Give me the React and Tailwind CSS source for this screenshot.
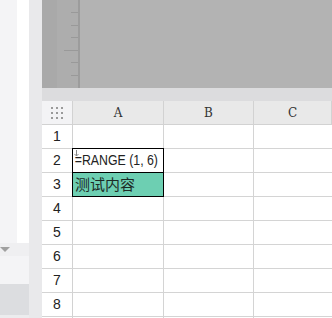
import React from "react";

const rows = [1, 2, 3, 4, 5, 6, 7, 8, null];

function Ruler() {
  const ticks = [12, 25, 37, 62, 75];
  return (
    <div className="relative w-[38px] h-full flex">
      <div className="w-[15px] h-full bg-[#a9a9a9]" />
      <div className="flex-1 h-full bg-[#adadad] border-r-2 border-[#9c9c9c] relative">
        {ticks.map((t) => (
          <div key={t} className="absolute right-0 h-px w-[7px] bg-[#999]" style={{ top: t }} />
        ))}
        <div className="absolute right-0 h-px w-[14px] bg-[#999]" style={{ top: 50 }} />
      </div>
    </div>
  );
}

export default function App() {
  const sans = { fontFamily: '"Liberation Sans", Arial, sans-serif' };
  return (
    <div className="w-[332px] h-[318px] flex overflow-hidden bg-white" style={sans}>
      {/* left panel */}
      <div className="w-[29px] h-full flex flex-col shrink-0">
        <div className="h-[243px] shrink-0 flex">
          <div className="w-[17px] bg-[#f4f4f6]" />
          <div className="flex-1 bg-white" />
        </div>
        <div className="h-[13px] shrink-0 bg-[#efeff1] flex items-center">
          <svg width="10" height="6" viewBox="0 0 10 6">
            <polygon points="0,0 10,0 5,5" fill="#a0a0a0" />
          </svg>
        </div>
        <div className="h-[28px] shrink-0 bg-[#f4f4f6]" />
        <div className="h-[31px] shrink-0 bg-[#dcdde0]" />
        <div className="flex-1 bg-[#ececee]" />
      </div>
      <div className="w-[13px] h-full shrink-0 bg-[#e9e9eb]" />
      {/* main */}
      <div className="flex-1 h-full flex flex-col overflow-hidden">
        <div className="h-[88px] shrink-0 bg-[#b3b3b3] flex">
          <Ruler />
        </div>
        <div className="h-[13px] shrink-0 bg-[#dcdcde]" />
        {/* header row */}
        <div className="h-[24px] shrink-0 flex border-b border-[#d2d2d2] bg-[#e9e9e9]">
          <div className="w-[31px] h-full bg-[#f3f3f5] border-r border-[#d2d2d2] flex items-center justify-center">
            <div className="grid grid-cols-3 gap-[3px]">
              {Array.from({ length: 9 }).map((_, i) => (
                <div key={i} className="w-[2px] h-[2px] bg-[#9a9a9a]" />
              ))}
            </div>
          </div>
          {["A", "B", "C"].map((c, i) => (
            <div
              key={c}
              className={`h-full flex items-center justify-center text-[12px] text-[#333] border-r border-[#d2d2d2] ${
                i === 0 ? "w-[91px]" : i === 1 ? "w-[90px]" : "flex-1"
              }`}
              style={{ fontFamily: '"DejaVu Serif", "Liberation Serif", serif' }}
            >
              {c}
            </div>
          ))}
        </div>
        {rows.map((r, idx) => (
          <div key={idx} className="h-[24px] shrink-0 flex border-b border-[#d4d4d4]">
            <div className="w-[31px] h-full border-r border-[#d2d2d2] flex items-center justify-center text-[14px] text-[#222]">
              {r}
            </div>
            <div
              className={`w-[91px] h-full border-r border-[#d4d4d4] relative flex items-center ${
                r === 3 ? "bg-[#6dcfb2]" : ""
              }`}
            >
              {(r === 2 || r === 3) && (
                <div className="absolute top-[-1px] left-[-1px] right-[-1px] bottom-[-1px] border border-black" />
              )}
              {r === 2 && (
                <>
                  <svg width="5" height="7" viewBox="0 0 5 7" className="absolute left-[1px] top-[1px]">
                    <path d="M2.5 0 V6 M0.5 4 L2.5 6 L4.5 4" stroke="#888" strokeWidth="1" fill="none" />
                  </svg>
                  <span className="pl-[2px] text-[14px] text-[#222] whitespace-nowrap inline-block origin-left scale-x-[0.88]">
                    =RANGE (1, 6)
                  </span>
                </>
              )}
              {r === 3 && (
                <span
                  className="pl-[2px] text-[15px] text-[#1d2b26] whitespace-nowrap"
                  style={{ fontFamily: '"Noto Sans CJK SC", sans-serif' }}
                >
                  测试内容
                </span>
              )}
            </div>
            <div className="w-[90px] h-full border-r border-[#d4d4d4]" />
            <div className="flex-1 h-full" />
          </div>
        ))}
      </div>
    </div>
  );
}
